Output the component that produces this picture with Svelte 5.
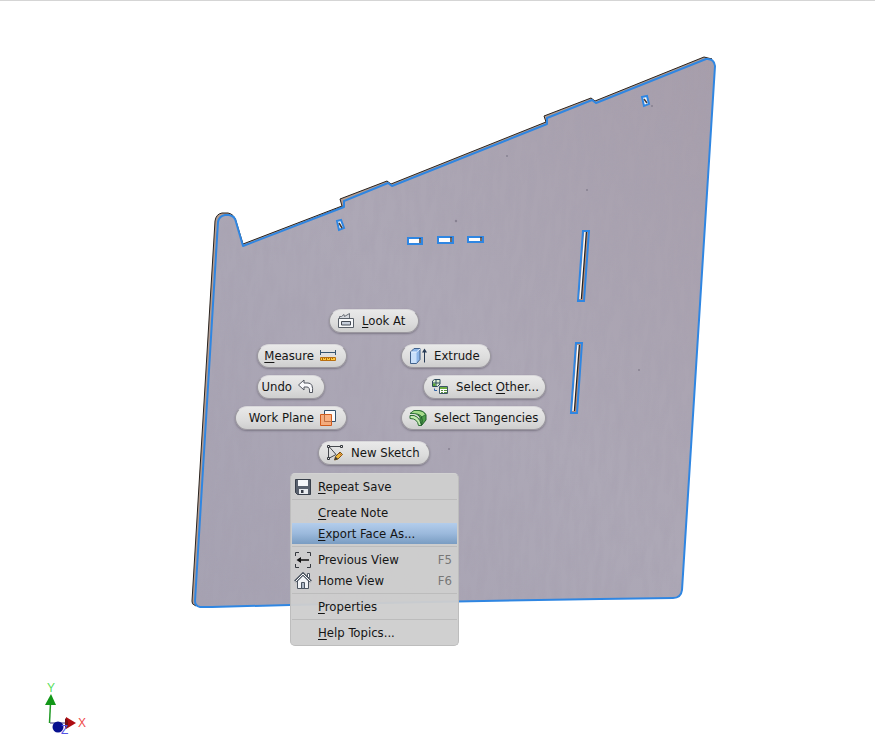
<script>
  const commands = [
    { id: 'look', x: 329, y: 309, w: 90, key: 'L', rest: 'ook At' },
    { id: 'measure', x: 257, y: 344, w: 90, key: 'M', rest: 'easure', flip: true },
    { id: 'extrude', x: 401, y: 344, w: 90, rest: 'Extrude' },
    { id: 'undo', x: 257, y: 375, w: 68, rest: 'Undo', flip: true },
    { id: 'other', x: 423, y: 375, w: 123, pre: 'Select ', key: 'O', rest: 'ther...' },
    { id: 'plane', x: 235, y: 406, w: 112, rest: 'Work Plane', flip: true },
    { id: 'tangent', x: 401, y: 406, w: 145, rest: 'Select Tangencies' },
    { id: 'sketch', x: 318, y: 441, w: 112, rest: 'New Sketch' }
  ];

  const groups = [
    [{ key: 'R', rest: 'epeat Save', id: 'save' }],
    [{ key: 'C', rest: 'reate Note' }, { key: 'E', rest: 'xport Face As...', active: true }],
    [{ rest: 'Previous View', id: 'previous', hot: 'F5' }, { rest: 'Home View', id: 'home', hot: 'F6' }],
    [{ key: 'P', rest: 'roperties' }],
    [{ key: 'H', rest: 'elp Topics...' }]
  ];

  const face =
    'M195 601 L218 222 Q219 216 225 215 L229 215 Q235 216 236 222 L243 246 L344 207 L344 201 L388 183 L392 186 L547 124 L547 118 L592 100 L596 103 L706 59 Q714 58 715 66 L682 590 Q681 598 673 598 L600 599 L430 602 L290 605 L212 607 L200 607 Q195 606 195 601 Z';
  const side =
    'M192 601 L215 221 Q216 214 222 213 L228 213 Q234 214 236 221 L243 244 L342 206 L340 199 L387 181 L391 184 L546 122 L544 116 L591 98 L595 101 L704 57 L712 59 L706 61 L243 247 L225 216 L218 222 L196 606 Q191 604 192 601 Z';
</script>

{#snippet icon(id)}
  <svg class="icon" viewBox="0 0 18 18" aria-hidden="true">
    {#if id === 'look'}
      <path d="M1.500 6.500h15v9h-15z" fill="#f7f8fa" stroke="#596069" />
      <path d="M4.500 9.500h9v3.500h-9z" fill="#c6cedb" stroke="#454b55" />
      <path d="M2.500 6V4.500H4.500L7 2.500L7.500 4.500L12.500 1.500V6" fill="#d6d9de" stroke="#6b7078" />
    {:else if id === 'measure'}
      <path d="M2 5.500h14M1.500 3v5M16.500 3v5" stroke="#35536e" fill="none" />
      <path d="M1.500 10.500h15v3h-15z" fill="#ffc93c" stroke="#b96f10" />
      <path d="M3.500 11v2M5.500 11v1M7.500 11v2M9.500 11v1M11.500 11v2M13.500 11v1" stroke="#a8660d" />
    {:else if id === 'undo'}
      <path d="M1.500 7 L7 2 V5 H11 Q16.500 5 15.500 14.500 H12.500 Q13 9 10 9 H7 V12 Z" fill="#f8f8fa" stroke="#50545e" />
    {:else if id === 'plane'}
      <path d="M5.500 1.500h11v11h-11z" fill="#fafafa" stroke="#34506b" />
      <path d="M1.500 5.500h11v11h-11z" fill="#f8a36c" fill-opacity=".85" stroke="#d15b1b" />
      <path d="M5.500 5.500v7h7" stroke="#bd7045" fill="none" />
    {:else if id === 'extrude'}
      <path d="M1.500 5 L5 1.500 H11 V12.500 L7.500 16.500 H1.500 Z" fill="#8db6e8" stroke="#41618b" />
      <path d="M2 5h5.500v11H2z" fill="#c9e0fa" />
      <path d="M2 5h5.500L11 2" fill="none" stroke="#e5f1ff" />
      <path d="M15.500 15.500V3" stroke="#273a55" />
      <path d="M13 5.500 L15.500 1.500 L18 5.500Z" fill="#273a55" />
    {:else if id === 'other'}
      <path d="M1.500 3 L3.500 1.500 H9 V6 L6.500 8.500 H1.500 Z" fill="#dff0d2" stroke="#2d4a5c" />
      <path d="M5 1.500v7M1.500 5H9" stroke="#2d4a5c" />
      <path d="M2 5.500h2.500V8H2z" fill="#57a634" />
      <path d="M8.500 8.500h8v7h-8z" fill="#fff" stroke="#3c5566" />
      <path d="M9 9h7v2H9z" fill="#6fae42" />
      <path d="M10 12.500h2M13 12.500h3M10 14.500h2M13 14.500h3" stroke="#5c9140" />
      <path d="M3.500 10.500v2H6" stroke="#2d62a8" fill="none" />
    {:else if id === 'tangent'}
      <path d="M6.500 4 L10 1.500 Q14 1.500 17 5.500 V11 L12.500 16.500 H11 V8 Z" fill="#4d9f4a" stroke="#225c29" />
      <path d="M1 4.500 L5 1.500 H10 Q15 2 16.500 5.500 L13 8 Q10 4 1 4.500Z" fill="#a4da88" stroke="#2f713a" />
      <path d="M1 6.500 Q10 5 12.500 16.500 H9.500 Q8.500 9.500 1 9.500Z" fill="#c5ebb0" stroke="#2a6b33" />
      <path d="M12.500 8 Q14 11 12.500 16" fill="none" stroke="#205829" />
    {:else if id === 'sketch'}
      <path d="M2.500 3V14.500L10 10.500L3 2.500H15" fill="none" stroke="#46494e" />
      <path d="M1.500 1.500h2v2h-2zM14.500 1.500h2v2h-2zM1.500 13.500h2v2h-2z" fill="#efefef" stroke="#33363b" />
      <path d="M8.500 16 L9.500 12.500 L14 8 L16.500 10.500 L12 15Z" fill="#efb638" stroke="#76531b" />
      <path d="M8.500 16 L9.500 12.500 L12 15Z" fill="#3c3a36" />
      <path d="M13 9l2.500 2.500" stroke="#bc5e43" />
    {:else if id === 'save'}
      <path d="M1.500 1.500h15v15h-13l-2-2z" fill="#59616d" stroke="#383f4a" />
      <path d="M4 2h10v6H4z" fill="#f4f6f8" />
      <path d="M5 11h9v5H5z" fill="#e8ebef" />
      <path d="M7 12h2.500v3H7z" fill="#353b46" />
    {:else if id === 'previous'}
      <path d="M1.500 5V1.500H5M13 1.500h3.500V5M16.500 13v3.500H13M5 16.500H1.500V13" fill="none" stroke="#34383e" />
      <path d="M5 9h10" stroke="#111" stroke-width="1.500" />
      <path d="M2.500 9 L7 6 V12Z" fill="#111" />
    {:else if id === 'home'}
      <path d="M3.500 9v7.500h11V9L9 3.500Z" fill="#f1f3f6" stroke="#4b5460" />
      <path d="M1 9.500 L9 1.500 L17 9.500" fill="none" stroke="#4b5460" stroke-width="2.500" />
      <path d="M1.500 9.500 L9 2 L16.500 9.500" fill="none" stroke="#fff" />
      <path d="M13.500 1.500h2v4h-2z" fill="#fff" stroke="#4b5460" />
      <path d="M7.500 10.500h3v6h-3z" fill="#aeb9c7" stroke="#4b5460" />
    {/if}
  </svg>
{/snippet}

<main>
  <svg class="model" width="875" height="756" viewBox="0 0 875 756" role="img" aria-label="Panel model with highlighted face">
    <defs>
      <linearGradient id="shade" x1="0" y1="1" x2="1" y2="0">
        <stop offset="0" stop-color="#a6a2b2" />
        <stop offset=".5" stop-color="#ada8b6" />
        <stop offset="1" stop-color="#a79eab" />
      </linearGradient>
      <filter id="grain" x="0" y="0" width="100%" height="100%">
        <feTurbulence type="fractalNoise" baseFrequency=".15 .03" numOctaves="3" seed="8" />
        <feColorMatrix values="0 0 0 0 .38  0 0 0 0 .35  0 0 0 0 .43  2.200 0 0 0 -.85" />
      </filter>
      <clipPath id="faceClip"><path d={face} /></clipPath>
    </defs>
    <path d={side} fill="#b29b90" stroke="#29231f" stroke-width="1" />
    <path d={face} fill="url(#shade)" />
    <g clip-path="url(#faceClip)">
      <rect x="185" y="50" width="540" height="570" filter="url(#grain)" opacity=".4" transform="rotate(3 450 330)" />
      <g fill="#756f80" opacity=".65">
        <circle cx="456" cy="221" r="1.200" /><circle cx="562" cy="96" r="1" />
        <circle cx="587" cy="190" r="1" /><circle cx="449" cy="449" r="1" />
        <circle cx="507" cy="156" r="1" />
        <circle cx="652" cy="106" r="1" /><circle cx="639" cy="370" r="1" />
      </g>
    </g>
    <path d={face} fill="none" stroke="#2f86e2" stroke-width="2" stroke-linejoin="round" />
    <g fill="#fff" stroke="#2f86e2" stroke-width="2">
      <path d="M408 238h14v6h-14zM438 237h15v6h-15zM468 237h15v5h-15z" />
      <path d="M337 221l4-1 3 8-5 2zM642 97l5-1 2 8-5 2z" />
    </g>
    <path d="M420 238v5M451 237v5M481 237v4M339 223l3 5M644 99l3 4" stroke="#443832" stroke-width="1.500" />
    <g fill="#b48b78" stroke="#2f86e2" stroke-width="2">
      <path d="M583 231h6l-5 70h-6zM576 343h6l-5 70h-6z" />
    </g>
    <path d="M586 232l-5 67M579 345l-5 66" stroke="#242424" stroke-width="2" />
    <path d="M585 232l-5 67M578 345l-5 66" stroke="#fff" stroke-width="1.500" />

    <path d="M49.500 723L50.500 703" stroke="#219a25" stroke-width="1.500" />
    <path d="M45 705 L51 694 L56 705Z" fill="#129718" />
    <path d="M50 723h16" stroke="#353078" />
    <path d="M66 717 L76 723 L66 729Z" fill="#ad0c11" />
    <path d="M65 718l3 3v5l-3 3z" fill="#741014" />
    <circle cx="58" cy="727" r="5.500" fill="#07108f" />
    <text x="47" y="692" fill="#58de5b">Y</text>
    <text x="78" y="727" fill="#ef4b4b">X</text>
    <text x="61" y="734" fill="#5454e5">Z</text>
  </svg>

  <nav aria-label="Marking menu">
    {#each commands as c}
      <button class="command" class:flip={c.flip} style="left:{c.x}px; top:{c.y}px; width:{c.w}px">
        {@render icon(c.id)}
        <span>{c.pre ?? ''}{#if c.key}<u>{c.key}</u>{/if}{c.rest}</span>
      </button>
    {/each}
  </nav>

  <div class="menu" role="menu">
    {#each groups as group}
      <div class="group" role="group">
        {#each group as item}
          <button class="item" class:active={item.active} role="menuitem">
            <span class="slot">{#if item.id}{@render icon(item.id)}{/if}</span>
            <span class="label">{#if item.key}<u>{item.key}</u>{/if}{item.rest}</span>
            {#if item.hot}<kbd>{item.hot}</kbd>{/if}
          </button>
        {/each}
      </div>
    {/each}
  </div>
</main>

<style>
  :global(body) {
    background: #fff;
  }
  main {
    position: relative;
    box-sizing: border-box;
    min-height: 100vh;
    overflow: hidden;
    border-top: 1px solid #d5d5d5;
    font: 13px/16px "DejaVu Sans Condensed", "DejaVu Sans", sans-serif;
    font-stretch: condensed;
    color: #151515;
  }
  .model {
    position: absolute;
    left: 0;
    top: -1px;
  }
  .model text {
    font: 12px "Liberation Sans", sans-serif;
  }
  nav {
    position: absolute;
    left: 0;
    top: -1px;
  }
  button {
    margin: 0;
    font: inherit;
    color: inherit;
    white-space: nowrap;
  }
  u {
    text-underline-offset: 2px;
    text-decoration-thickness: 1px;
  }
  .icon {
    width: 18px;
    height: 18px;
    flex: none;
  }
  .command {
    position: absolute;
    box-sizing: border-box;
    display: flex;
    align-items: center;
    gap: 7px;
    height: 24px;
    padding: 0 7px;
    border: 1px solid #9b989f;
    border-top-color: #d8d7da;
    border-radius: 12px;
    background: linear-gradient(#e9e9e9, #dcdcdc 60%, #cecece);
    box-shadow: 0 1px 2px #5e586899;
  }
  .flip {
    flex-direction: row-reverse;
    gap: 5px;
    padding: 0 9px;
  }
  .menu {
    position: absolute;
    left: 290px;
    top: 472px;
    box-sizing: border-box;
    width: 169px;
    padding: 2px 1px;
    border: 1px solid #bdbdbd;
    border-top-color: #d2d2d2;
    border-radius: 5px;
    background: #cececef5;
  }
  .group + .group {
    margin-top: 2px;
    padding-top: 2px;
    border-top: 1px solid #bcbcbc;
  }
  .item {
    display: flex;
    align-items: center;
    width: 100%;
    height: 21px;
    padding: 0 5px 0 2px;
    border: 0;
    background: none;
    text-align: left;
  }
  .active {
    background: linear-gradient(#b3cdec, #9bb9dc 50%, #799cc2);
  }
  .slot {
    display: flex;
    width: 24px;
  }
  .label {
    flex: 1;
  }
  kbd {
    font: inherit;
    color: #777;
  }
</style>
